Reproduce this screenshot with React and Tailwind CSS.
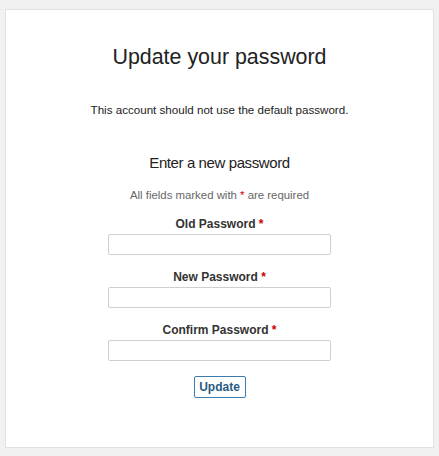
import { useState } from 'react'

const campos = [
  { id: 'old', label: 'Old Password' },
  { id: 'new', label: 'New Password' },
  { id: 'confirm', label: 'Confirm Password' },
]

function App() {
  const [valores, setValores] = useState({ old: '', new: '', confirm: '' })

  return (
    <div className="min-h-[456px] bg-[#f1f1f1] pt-[9px] pl-[5px] font-['Liberation_Sans',Arial,sans-serif]">
      <div className="w-[429px] h-[439px] bg-white border border-[#e2e2e2] flex flex-col items-center text-[#222]">
        <h1 className="mt-[34px] text-[21.4px] leading-[26px] font-normal">Update your password</h1>

        <p className="mt-[33px] text-[11.6px] leading-[14px]">This account should not use the default password.</p>

        <h2 className="mt-[36px] text-[15px] leading-[19px] font-normal tracking-[-0.4px]">Enter a new password</h2>

        <p className="mt-[16px] text-[11.4px] leading-[14px] text-[#666]">
          All fields marked with <span className="text-[#c00]">*</span> are required
        </p>

        <form className="flex flex-col items-center" onSubmit={(e) => e.preventDefault()}>
          {campos.map(c => (
            <div key={c.id} className="flex flex-col items-center mt-[15px]">
              <label htmlFor={c.id} className="text-[12px] leading-[14px] font-bold text-[#333]">
                {c.label} <span className="text-[#c00]">*</span>
              </label>
              <input
                id={c.id}
                type="password"
                value={valores[c.id]}
                onChange={(e) => setValores({ ...valores, [c.id]: e.target.value })}
                className="mt-[3px] w-[223px] h-[21px] border border-[#cfcfcf] rounded-[2px] bg-white px-1 text-[12px] outline-none"
              />
            </div>
          ))}
          <button
            type="submit"
            className="mt-[15px] w-[52px] h-[22px] border border-[#3a7bb0] rounded-[2px] bg-white text-[12px] font-bold text-[#2b5b84] leading-none"
          >
            Update
          </button>
        </form>
      </div>
    </div>
  )
}

export default App
